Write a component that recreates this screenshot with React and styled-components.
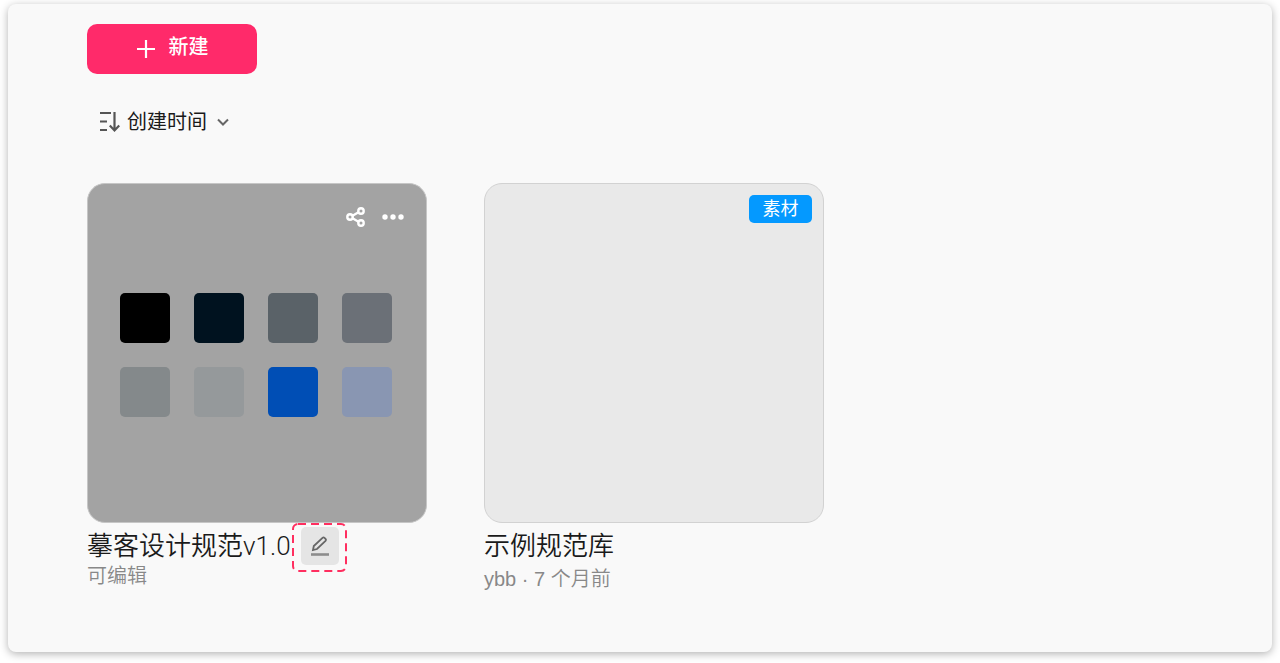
import styled, { createGlobalStyle } from "styled-components";

const swatches = [
  "#000000",
  "#00121f",
  "#5a6268",
  "#6b7077",
  "#84898b",
  "#95999b",
  "#004eb5",
  "#8996b2",
];

const IconPlus = () => (
  <svg width="20" height="20" viewBox="0 0 20 20" aria-hidden="true">
    <path d="M10 1v18M1 10h18" stroke="currentColor" strokeWidth="2.2" />
  </svg>
);

const IconSort = () => (
  <svg
    width="22"
    height="22"
    viewBox="0 0 22 22"
    fill="none"
    stroke="#555"
    strokeWidth="2.2"
    aria-hidden="true"
  >
    <path d="M1 2h11M1 10.500h7M1 19h7" strokeWidth="1.8" />
    <path d="M15.500 1v18M10.800 14.500l4.700 5 4.700-5" />
  </svg>
);

const IconChevron = () => (
  <svg width="12" height="8" viewBox="0 0 12 8" fill="none" aria-hidden="true">
    <path d="M1 1.500l5 5 5-5" stroke="#666" strokeWidth="2" />
  </svg>
);

const IconShare = () => (
  <svg
    width="20"
    height="20"
    viewBox="0 0 20 20"
    fill="none"
    stroke="currentColor"
    strokeWidth="2.4"
    aria-hidden="true"
  >
    <circle cx="4" cy="10" r="2.700" />
    <circle cx="15" cy="4" r="2.700" />
    <circle cx="15" cy="16" r="2.700" />
    <path d="M6.500 8.700l6-3.400M6.500 11.300l6 3.400" />
  </svg>
);

const IconMore = () => (
  <svg
    width="22"
    height="6"
    viewBox="0 0 22 6"
    fill="currentColor"
    aria-hidden="true"
  >
    <circle cx="3" cy="3" r="2.700" />
    <circle cx="11" cy="3" r="2.700" />
    <circle cx="19" cy="3" r="2.700" />
  </svg>
);

const IconPencil = () => (
  <svg
    width="20"
    height="20"
    viewBox="0 0 20 20"
    fill="none"
    stroke="#666"
    strokeWidth="1.800"
    aria-hidden="true"
  >
    <path d="M3 14l.8-4L12.500 1.800q1-.9 2 0l1 1q.9 1 0 2L7 13z" />
    <path d="M1 18.500h18" stroke="#8c8c8c" strokeWidth="2.600" />
  </svg>
);

const App = () => (
  <>
    <GlobalStyle />
    <Panel>
      <CreateButton type="button">
        <IconPlus />
        <span>新建</span>
      </CreateButton>
      <SortButton type="button">
        <IconSort />
        <span>创建时间</span>
        <IconChevron />
      </SortButton>
      <Libraries>
        <Library>
          <Cover $active>
            <CoverActions>
              <IconButton type="button" aria-label="分享">
                <IconShare />
              </IconButton>
              <IconButton type="button" aria-label="更多">
                <IconMore />
              </IconButton>
            </CoverActions>
            <Swatches>
              {swatches.map((color) => (
                <Swatch key={color} $color={color} />
              ))}
            </Swatches>
          </Cover>
          <TitleRow>
            <Title>摹客设计规范v1.0</Title>
            <EditButton type="button" aria-label="编辑名称">
              <IconPencil />
              <Highlight viewBox="0 0 55 49" aria-hidden="true">
                <rect x="1" y="1" width="53" height="47" rx="5" />
              </Highlight>
            </EditButton>
          </TitleRow>
          <Meta>可编辑</Meta>
        </Library>
        <Library>
          <Cover>
            <Tag>素材</Tag>
          </Cover>
          <TitleRow>
            <Title>示例规范库</Title>
          </TitleRow>
          <Meta $spaced>ybb · 7 个月前</Meta>
        </Library>
      </Libraries>
    </Panel>
  </>
);

export default App;

const GlobalStyle = createGlobalStyle`
  * {
    box-sizing: border-box;
  }

  body {
    margin: 0;
    padding: 4px 8px 11px;
    background: #fff;
    color: #1a1a1a;
    font-family: "Liberation Sans", "Noto Sans CJK SC", sans-serif;
  }

  button {
    border: 0;
    padding: 0;
    background: none;
    color: inherit;
    font: inherit;
    cursor: pointer;
  }
`;

const Panel = styled.main`
  display: flex;
  flex-direction: column;
  align-items: flex-start;
  padding: 20px 79px 62px;
  border-radius: 8px;
  background: #f9f9f9;
  box-shadow: 0 2px 8px rgb(0 0 0 / 30%);
`;

const CreateButton = styled.button`
  display: flex;
  align-items: center;
  justify-content: center;
  gap: 13px;
  width: 170px;
  height: 50px;

  && {
    border-radius: 10px;
    background: #ff2a6a;
    color: #fff;
    font-size: 20px;
    font-weight: 500;
  }

  span {
    line-height: 24px;
    padding-bottom: 4px;
  }
`;

const SortButton = styled.button`
  display: flex;
  align-items: center;
  height: 30px;
  margin: 33px 0 46px 12px;

  && {
    font-size: 20px;
  }

  span {
    margin: 0 10px 0 6px;
    line-height: 30px;
  }
`;

const Libraries = styled.div`
  display: flex;
  flex-wrap: wrap;
  gap: 57px;
`;

const Library = styled.article`
  width: 340px;
`;

const Cover = styled.div`
  display: flex;
  flex-direction: column;
  height: 340px;
  padding: ${({ $active }) => ($active ? "22px" : "11px")};
  border: 1px solid ${({ $active }) => ($active ? "#c6c6c6" : "#d2d2d2")};
  border-radius: 18px;
  background: ${({ $active }) => ($active ? "#a3a3a3" : "#e9e9e9")};
`;

const CoverActions = styled.div`
  display: flex;
  justify-content: flex-end;
  gap: 16px;
`;

const IconButton = styled.button`
  display: flex;
  align-items: center;
  height: 22px;

  && {
    color: #fff;
  }
`;

const Swatches = styled.div`
  display: grid;
  grid-template-columns: repeat(4, 50px);
  gap: 24px;
  margin: 65px 0 0 10px;
`;

const Swatch = styled.div`
  height: 50px;
  border-radius: 5px;
  background: ${({ $color }) => $color};
`;

const Tag = styled.span`
  align-self: flex-end;
  width: 63px;
  border-radius: 5px;
  background: #0499ff;
  color: #fff;
  font-size: 18px;
  line-height: 28px;
  text-align: center;
`;

const TitleRow = styled.div`
  display: flex;
  align-items: center;
  gap: 10px;
  height: 38px;
  margin-top: 4px;
`;

const Title = styled.h2`
  margin: 0;
  font-family: Roboto, "Noto Sans CJK SC", sans-serif;
  font-size: 26px;
  font-weight: 350;
  line-height: 38px;
  white-space: nowrap;
`;

const EditButton = styled.button`
  position: relative;
  display: flex;
  align-items: center;
  justify-content: center;
  width: 38px;
  height: 38px;

  && {
    border-radius: 5px;
    background: #e5e5e5;
  }
`;

const Highlight = styled.svg`
  position: absolute;
  top: -4px;
  left: -9px;
  width: 55px;
  height: 49px;
  fill: none;
  stroke: #ff2f60;
  stroke-width: 2;
  stroke-dasharray: 8 5;
  pointer-events: none;
`;

const Meta = styled.p`
  margin: ${({ $spaced }) => ($spaced ? "3px" : "0")} 0 0;
  color: #888;
  font-size: 20px;
  font-weight: 350;
  line-height: 22px;
`;
